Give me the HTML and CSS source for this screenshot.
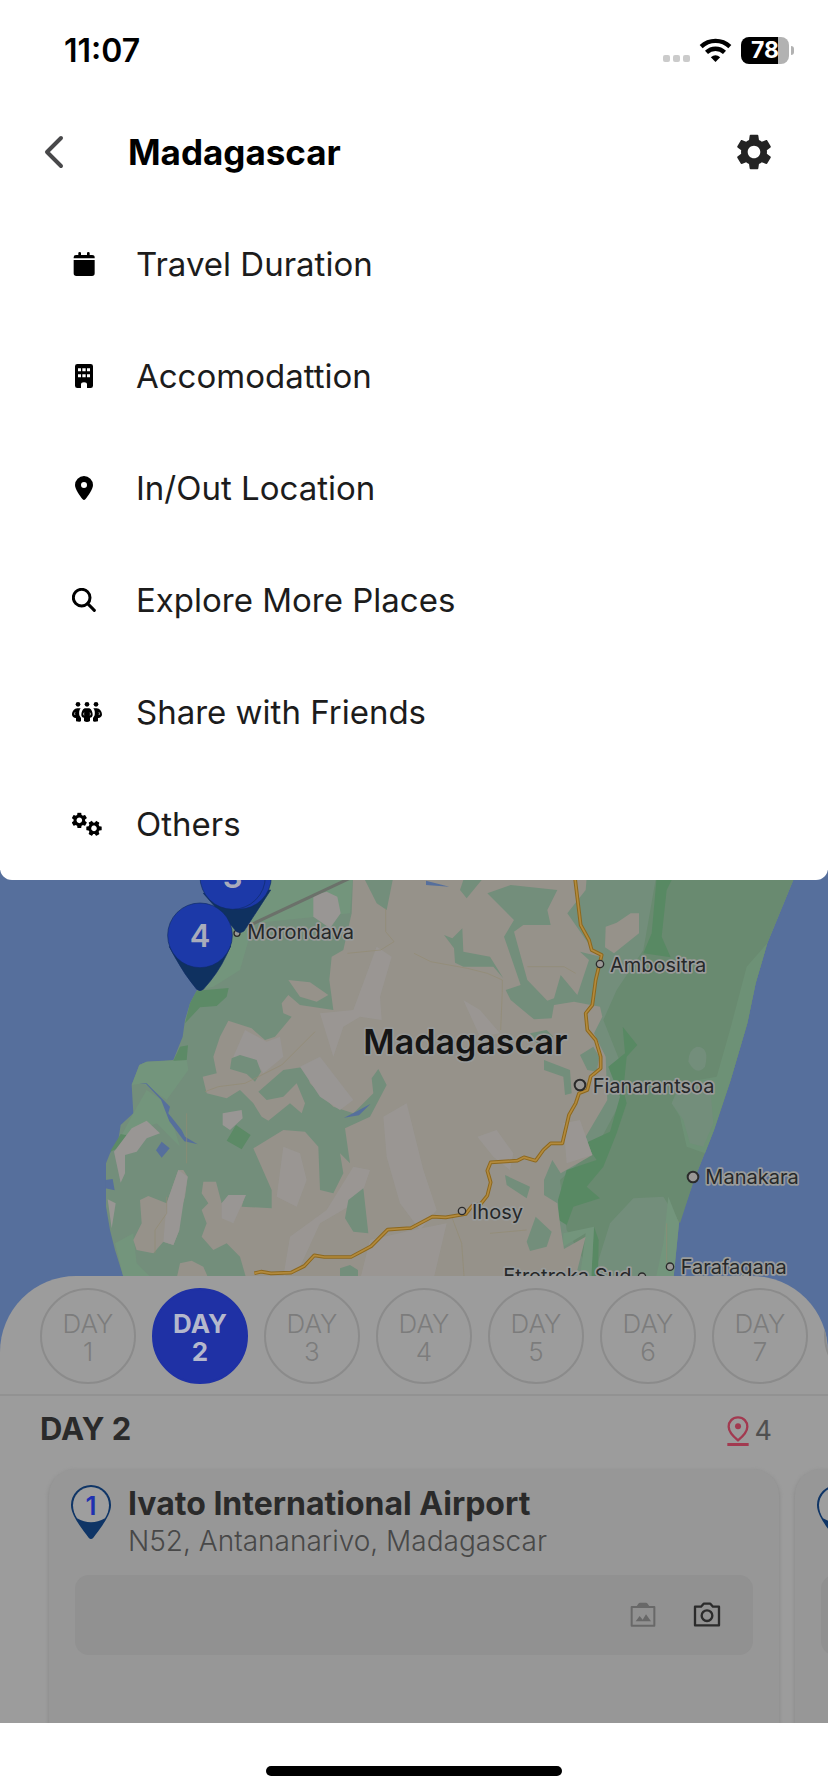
FILE: index.html
```
<!DOCTYPE html>
<html lang="en">
<head>
  <meta charset="utf-8">
  <meta name="viewport" content="width=device-width, initial-scale=1.0">
  <title>Madagascar</title>
  <link rel="stylesheet" href="styles.css">
</head>

<body>
  <!-- shared shapes -->
  <svg class="defs" width="0" height="0" aria-hidden="true">
    <symbol id="gear" viewBox="2 2 20 20">
      <path d="M19.14 12.94c.04-.3.06-.61.06-.94 0-.32-.02-.64-.07-.94l2.03-1.58c.18-.14.23-.41.12-.61l-1.92-3.32c-.12-.22-.37-.29-.59-.22l-2.39.96c-.5-.38-1.03-.7-1.62-.94l-.36-2.54c-.04-.24-.24-.41-.48-.41h-3.84c-.24 0-.43.17-.47.41l-.36 2.54c-.59.24-1.13.57-1.62.94l-2.39-.96c-.22-.08-.47 0-.59.22L2.74 8.87c-.12.21-.08.47.12.61l2.03 1.58c-.05.3-.09.63-.09.94s.02.64.07.94l-2.03 1.58c-.18.14-.23.41-.12.61l1.92 3.32c.12.22.37.29.59.22l2.39-.96c.5.38 1.03.7 1.62.94l.36 2.54c.05.24.24.41.48.41h3.84c.24 0 .44-.17.47-.41l.36-2.54c.59-.24 1.13-.56 1.62-.94l2.39.96c.22.08.47 0 .59-.22l1.92-3.32c.12-.22.07-.47-.12-.61l-2.01-1.58zM12 15.5c-1.93 0-3.5-1.57-3.5-3.5s1.57-3.5 3.5-3.5 3.5 1.57 3.5 3.5-1.57 3.5-3.5 3.5z"/>
    </symbol>
    <symbol id="card-pin" viewBox="0 0 120 162">
      <path fill="#0f3566" d="M60 0a60 60 0 0 1 60 61c0 32-36 74-53 97q-7 8-14 0C36 135 0 93 0 61A60 60 0 0 1 60 0z"/>
      <path fill="#9e9e9e" d="M60 6c31 0 54 25 54 55 0 14-5 28-12 39q-42 24-84 0C11 89 6 75 6 61 6 31 29 6 60 6z"/>
    </symbol>
  </svg>

  <div class="top-panel">
    <div class="status-bar">
      <span class="time">11:07</span>
      <div class="status-icons">
        <span class="signal"><i></i><i></i><i></i></span>
        <svg class="wifi" viewBox="178 48 98 78" aria-hidden="true">
          <path d="M184 77a62 62 0 0 1 86 0M200 94a39 39 0 0 1 54 0" fill="none" stroke="#000" stroke-width="13"/>
          <path d="M213 109q14-12 28 0l-14 14z"/>
        </svg>
        <span class="battery"><b>78</b></span>
      </div>
    </div>

    <header>
      <button class="icon-btn" aria-label="Back">
        <svg width="20" height="34" viewBox="0 0 20 34"><path d="M17 3L3 17l14 14" fill="none" stroke="#48484a" stroke-width="4" stroke-linecap="round" stroke-linejoin="round"/></svg>
      </button>
      <h1>Madagascar</h1>
      <button class="icon-btn" aria-label="Settings">
        <svg width="36" height="36" fill="#232323"><use href="#gear"/></svg>
      </button>
    </header>

    <nav>
      <ul>
        <li><a href="#duration">
          <svg width="24" height="24" viewBox="0 0 72 72"><path d="M5 19v-3q0-7 7-7h7V3q0-3 4-3t4 3v6h18V3q0-3 4-3t4 3v6h7q8 0 8 7v3zM5 24h63v40q0 8-8 8H13q-8 0-8-8z"/></svg>
          <span>Travel Duration</span></a></li>
        <li><a href="#accommodation">
          <svg width="24" height="24" viewBox="0 0 72 72"><path fill-rule="evenodd" d="M16 0h40q7 0 7 7v58q0 7-7 7H45V61q0-6-9-6t-9 6v11H16q-7 0-7-7V7q0-7 7-7zM18 13v9h9v-9zm13 0v9h10v-9zm14 0v9h9v-9zM18 31v9h9v-9zm13 0v9h10v-9zm14 0v9h9v-9z"/></svg>
          <span>Accomodattion</span></a></li>
        <li><a href="#location">
          <svg width="24" height="24" viewBox="0 0 72 72"><path fill-rule="evenodd" d="M36 0a27 27 0 0 1 27 27c0 13-15 33-23 43q-4 4-8 0C24 60 9 40 9 27A27 27 0 0 1 36 0zm0 18a9 9 0 1 0 0 18 9 9 0 0 0 0-18z"/></svg>
          <span>In/Out Location</span></a></li>
        <li><a href="#explore">
          <svg width="24" height="24" viewBox="0 0 72 72"><g fill="none" stroke="#000" stroke-width="9" stroke-linecap="round"><circle cx="29" cy="29" r="25"/><path d="M47 47l20 20"/></g></svg>
          <span>Explore More Places</span></a></li>
        <li><a href="#share">
          <svg width="30" height="22" viewBox="0 0 90 66">
            <circle cx="18" cy="10" r="7"/><circle cx="45" cy="10" r="7"/><circle cx="72" cy="10" r="7"/>
            <path d="M16 22h10c-5 6-5 13-4 21l5 8v9q-2 3-6 2l-9-1v-10C7 52 0 46 0 41c0-9 7-19 16-19zM74 22H64c5 6 5 13 4 21l-5 8v9q2 3 6 2l9-1v-10c5 1 12-5 12-10 0-9-7-19-16-19z"/>
            <path d="M38 22h14c7 3 10 12 10 20 0 5-4 8-8 8v10q-9 6-18 0V50c-4 0-8-3-8-8 0-8 3-17 10-20z"/>
            <path d="M9 34q-3 5 0 8M81 34q3 5 0 8M36 35q-3 4 0 8M54 35q3 4 0 8" fill="none" stroke="#fff" stroke-width="2"/>
          </svg>
          <span>Share with Friends</span></a></li>
        <li><a href="#others">
          <svg width="30" height="24" viewBox="0 0 90 72">
            <use href="#gear" x="-2" y="1" width="48" height="48"/>
            <use href="#gear" x="42" y="25" width="48" height="48" transform="rotate(30 66 49)"/>
          </svg>
          <span>Others</span></a></li>
      </ul>
    </nav>
  </div>

  <svg class="map" viewBox="0 0 2484 1500" preserveAspectRatio="xMidYMin slice" role="img" aria-label="Map of Madagascar">
    <rect width="2484" height="1500" fill="#566f9c"/>
    <!-- land -->
    <path fill="#738e7b" d="M720 0L700 200 640 300 590 362 570 400 555 450 548 500 520 570 440 575 418 585 395 645 400 730 362 765 355 810 330 850 318 880V1010L330 1080 345 1140 370 1220 400 1500H2010L2022 1210 2037 1060 2082 930 2142 780 2192 630 2242 460 2267 340 2302 220 2384 20V0z"/>
    <path fill="#73957c" d="M720 0H1060L1050 130 760 160 720 300 640 350 600 360 660 190zM440 575L560 570 565 600 500 690 430 640 395 645 418 585zM400 730L440 660 500 700 540 830 470 760 362 800zM345 1120L400 1090 410 1180 450 1220H370z"/>
    <path fill="#5c8a66" d="M590 362L686 354 680 380 650 408 600 412 555 460 570 400zM540 530L564 526 560 570 520 572zM362 792L380 796 355 835 330 845zM708 765L752 795 725 838 680 812z"/>
    <!-- rainforest belt -->
    <path fill="#698a70" d="M1972 0H2384V20L2302 220 2267 340 2242 460 2192 630 2142 780 2082 930 2040 1060 1990 980 1900 985 1830 1060 1780 1220 1700 1080 1680 930 1790 830 1860 700 1870 600 1810 450 1850 360 1930 240z"/>
    <path fill="#6d9176" d="M2302 220L2267 340 2242 460 2192 630 2142 780 2115 850 2060 830 2040 740 2015 700 2040 640 2150 620 2190 480 2240 290z"/>
    <path fill="#738e7b" d="M2090 530q40 0 25 60-25 30-50-15 0-35 25-45zM2045 640L2130 640 2140 760 2110 830 2070 820 2050 750 2015 700z"/>
    <path fill="#588963" d="M1972 0H2030L2000 60 1985 200 2012 262 1930 250 1955 190zM1868 470L1912 525 1880 560 1870 660 1880 700 1850 790 1810 890 1760 950 1800 985 1720 1010 1700 1065 1676 1050 1674 990 1700 900 1790 870 1755 820 1830 785 1860 680 1825 590 1875 550zM1782 1070L1796 1110 1794 1220H1774z"/>
    <path fill="#73957c" d="M1782 1070L1690 1090 1690 1130 1757 1090 1740 1220H1774zM2005 980L2037 1060 2022 1210 2018 1260H1960L1990 1120z"/>
    <!-- dry highlands -->
    <path fill="#96928a" d="M1060 0L1055 130 1030 240 995 260 988 330 1000 420 900 405 865 375 845 400 850 430 875 440 825 500 795 510 755 475 685 452 660 500 640 560 650 610 608 620 620 670 680 685 720 660 760 700 785 740 805 752 870 700 905 730 915 700 890 640 850 680 800 690 775 665 850 600 915 590 930 640 1000 710 1060 730 1120 670 1115 625 1135 597 1160 645 1110 740 1035 775 1050 880 1020 850 1030 910 1000 970 960 960 955 830 915 785 850 780 760 835 815 960 815 1015 725 1010 735 975 690 975 665 1000 648 935 610 935 605 970 625 1000 605 1020 620 1060 605 1100 640 1140 680 1120 720 1160 740 1230V1500H1700L1732 1200 1757 1100 1692 1137 1682 1075 1672 1000 1632 975V930L1657 870 1682 910 1777 855 1757 800 1822 690 1817 560 1782 490 1807 440 1800 410 1722 395 1662 405 1655 445 1602 448 1532 390 1517 360 1562 345 1512 200 1542 150 1462 70 1532 45 1672 60 1642 120 1652 165 1570 165 1542 185 1582 330 1642 392 1662 385 1682 315 1732 375 1767 270 1740 245 1802 260 1772 230 1702 130 1757 60 1762 0z"/>
    <path fill="#96928a" d="M1817 170L1850 158 1892 130H1917V190L1842 250 1815 232zM865 330L930 337 985 375 950 395 900 380zM420 990L445 978 500 1000 535 900 550 900 563 920 555 980 530 1060 538 1080 520 1125 490 1115 460 1150 410 1140 400 1110 425 1060zM540 1180L575 1172 610 1190 625 1225H530z"/>
    <path fill="#999694" d="M940 75L980 65 1012 80 1022 130 990 175 940 140zM342 845L395 775 440 752 480 790 440 805 410 845 375 855 375 910 362 938zM668 730L725 720 728 745 690 780 668 765zM323 988L347 1000 335 1075zM685 975L738 975 700 1060 665 1045 665 1000zM735 480L800 515 840 500 850 560 790 610 770 580 700 560zM900 590L960 560 1060 690 1020 720 960 680zM535 900L563 920 550 1000 538 1080 520 1125 490 1115 500 1000z"/>
    <path fill="#9b9997" opacity=".7" d="M1130 230L1175 260 1140 380 1145 450 1080 440 1030 470 1000 560 960 430 1060 420zM850 830L900 850 920 930 890 1010 830 980zM1060 890L1110 900 1080 990 960 1060 900 1190 850 1220 870 1100 980 1020zM1150 740L1220 700 1270 900 1310 1020 1260 1080 1200 1000 1160 860zM1390 390L1440 420 1500 490 1440 500zM1432 800L1490 780 1540 850 1530 900 1480 860zM1690 760L1740 750 1777 855 1700 880zM1110 1110L1240 1080 1340 1060 1300 1230H1080z"/>
    <!-- scattered woods -->
    <path fill="#738e7b" d="M1090 20L1180 20 1160 120 1130 100zM695 565L720 555 770 570 783 605 765 635 740 612 690 597zM1390 30H1445L1400 85 1380 60zM1332 195L1357 205 1387 175 1390 245 1470 260 1510 325 1480 290 1390 290 1365 278 1362 235zM1740 555L1780 530 1798 560 1790 605 1762 600zM1590 490L1640 480 1660 500 1610 520zM1632 570L1710 600 1715 670 1695 675 1690 620 1632 600zM1515 915L1590 950 1580 985 1520 945zM1607 1040L1655 1085 1640 1130 1590 1143 1580 1115zM1090 955L1105 1090 1060 1085 1035 1045 1045 990zM1020 1195L1050 1185 1074 1200V1225H1020z"/>
    <!-- lakes -->
    <path fill="#566f9c" d="M418 640h22l45 45 25 25-5 20 40 50 10 20 38 23-40-9-45-60-25-65-45-47zM485 815l24 20-24 28-17-22zM1032 743l40-20 40-22-35 35zM1278 32l70 18-70-5zM316 930l22-3 6 34-28-6z"/>
    <!-- minor roads -->
    <g fill="none" stroke="#938b72" stroke-width="2">
      <path d="M615 665l40-15 80-10 110-55 60-60 40-40M1157 115v70l25 30-40 25-100 10M1242 250l50 25 110 20 60 15 45 20v30l-5 120M1582 290l110 0 35 20M1355 1040l30 80 10 140M1470 1090l110-10M465 1150v-70l35-50v-50M560 730v150M2000 1180V1060"/>
    </g>
    <!-- national road -->
    <defs>
      <path id="rn7" d="M1722 0l20 165 25 45 8 30 30 15-18 75-10 75-20 25 5 50 25 30 15 50v35l-30 25-10 40-25 10-10 30-20 35-20 85h-35l-22 20-23 32-35-10-20 10-80 5-10 25 10 35-10 40-20 25-25 5-20 25-60 10-40-2-64 34-70 5-50 50-60 32-80 0-30-5-30 32-40 20-60 2-30-5-20 5"/>
    </defs>
    <g fill="none" stroke-linejoin="round">
      <use href="#rn7" stroke="#8d681e" stroke-width="11"/>
      <use href="#rn7" stroke="#b38a3c" stroke-width="5"/>
    </g>
    <path d="M740 170L1060 20" stroke="#6b716a" stroke-width="9"/>
    <!-- towns -->
    <g fill="#9a9896" stroke="#2b2b2b" stroke-width="4">
      <circle cx="711" cy="190" r="9"/>
      <circle cx="1800" cy="282" r="11"/>
      <circle cx="1740" cy="645" r="16" stroke-width="6"/>
      <circle cx="2079" cy="921" r="16" stroke-width="6"/>
      <circle cx="1386" cy="1023" r="11"/>
      <circle cx="2010" cy="1190" r="11"/>
      <circle cx="1926" cy="1220" r="11"/>
    </g>
    <g class="town">
      <text x="742" y="208">Morondava</text>
      <text x="1830" y="306">Ambositra</text>
      <text x="1778" y="669">Fianarantsoa</text>
      <text x="2116" y="943">Manakara</text>
      <text x="1416" y="1046">Ihosy</text>
      <text x="2042" y="1213">Farafagana</text>
      <text x="1510" y="1240">Etrotroka Sud</text>
      <text class="country" x="1090" y="553">Madagascar</text>
    </g>
    <!-- stops -->
    <g stroke="#0f2c66" stroke-width="2">
      <path fill="#0f3160" d="M610 70l100 115q12 6 22-2L812 60z"/>
      <circle cx="716" cy="20" r="98" fill="#1c39a8"/>
      <circle cx="698" cy="20" r="98" fill="#1c39a8"/>
      <path fill="#0f3160" d="M508 230l16 30q30 55 66 98 10 8 20 0 45-50 68-100l14-30z"/>
      <circle cx="600" cy="196" r="97" fill="#1c39a8"/>
    </g>
    <g class="stop">
      <text x="698" y="54">3</text>
      <text x="600" y="230">4</text>
    </g>
  </svg>

  <main>
    <div class="days">
      <button>DAY<br>1</button>
      <button class="active">DAY<br>2</button>
      <button>DAY<br>3</button>
      <button>DAY<br>4</button>
      <button>DAY<br>5</button>
      <button>DAY<br>6</button>
      <button>DAY<br>7</button>
      <button aria-label="Next day"></button>
    </div>

    <div class="day-head">
      <h2>DAY 2</h2>
      <span class="count">
        <svg width="22" height="30" viewBox="0 0 66 90" aria-hidden="true"><path d="M33 4c17 0 28 13 28 28 0 14-16 31-28 41C21 63 5 46 5 32 5 17 16 4 33 4z" fill="none" stroke="#a23a50" stroke-width="7"/><circle cx="33" cy="31" r="9" fill="#a23a50"/><path d="M1 81h64v9H1z" fill="#a23a50"/></svg>
        4
      </span>
    </div>

    <div class="cards">
      <article class="card">
        <div class="place">
          <div class="pin"><svg width="40" height="54" aria-hidden="true"><use href="#card-pin"/></svg><b>1</b></div>
          <div>
            <h3>Ivato International Airport</h3>
            <p>N52, Antananarivo, Madagascar</p>
          </div>
        </div>
        <div class="photos">
          <button class="icon-btn" aria-label="Gallery">
            <svg width="28" height="26" viewBox="0 0 84 78"><path d="M8 15h68v56H8z" fill="none" stroke="#686868" stroke-width="6" stroke-linejoin="round"/><path fill="#686868" d="M23 13l5-8q2-3 5-3h18q3 0 5 3l5 8v5H23zM20 58l12-16 9 11 10-16 15 21z"/></svg>
          </button>
          <button class="icon-btn" aria-label="Camera">
            <svg width="28" height="26" viewBox="0 0 84 78"><g fill="none" stroke="#2b2b2b" stroke-width="7" stroke-linejoin="round"><path d="M6 14h18l8-9h20l8 9h18v56H6z"/><circle cx="42" cy="41" r="16"/></g></svg>
          </button>
        </div>
      </article>
      <article class="card">
        <div class="place">
          <div class="pin"><svg width="40" height="54" aria-hidden="true"><use href="#card-pin"/></svg></div>
        </div>
        <div class="photos"></div>
      </article>
    </div>
  </main>

  <footer><div class="home-bar"></div></footer>
</body>
</html>
```
FILE: styles.css
```
* {
  box-sizing: border-box;
}

body {
  margin: 0;
  min-height: 100vh;
  display: flex;
  flex-direction: column;
  overflow-x: hidden;
  background: #fff;
  font-family: Inter, "Liberation Sans", sans-serif;
  color: #000;
}

h1, h2, h3, p, ul {
  margin: 0;
  padding: 0;
}

button {
  font-family: inherit;
  cursor: pointer;
}

.defs {
  position: absolute;
}

.icon-btn {
  display: flex;
  padding: 0;
  border: none;
  background: none;
}

/* white drop-down panel */
.top-panel {
  position: relative;
  z-index: 2;
  background: #fff;
  border-radius: 0 0 12px 12px;
}

.status-bar {
  display: flex;
  justify-content: space-between;
  align-items: center;
  height: 100px;
  padding: 0 34px 0 64px;
}

.time {
  font-size: 32px;
  font-weight: 600;
}

.status-icons {
  display: flex;
  align-items: center;
  gap: 9px;
}

.signal {
  display: flex;
  gap: 3px;
  padding-top: 16px;
}

.signal i {
  width: 7px;
  height: 7px;
  border-radius: 2px;
  background: #cbcbcb;
}

.wifi {
  width: 33px;
  height: 26px;
}

.battery {
  position: relative;
  width: 48px;
  height: 27px;
  margin-right: 5px;
  border-radius: 8px;
  background: linear-gradient(to right, #000 37px, #b2b2b2 37px);
  color: #fff;
  font-size: 23px;
  line-height: 27px;
  text-align: center;
}

.battery::after {
  content: "";
  position: absolute;
  left: 50px;
  top: 9px;
  width: 3px;
  height: 9px;
  border-radius: 0 4px 4px 0;
  background: #b2b2b2;
}

header {
  display: flex;
  align-items: center;
  height: 108px;
  padding: 0 56px 4px 44px;
}

h1 {
  flex: 1;
  margin-left: 64px;
  font-size: 35px;
  font-weight: 700;
}

nav ul {
  list-style: none;
}

nav a {
  display: flex;
  align-items: center;
  height: 112px;
  padding-left: 72px;
  color: #1c1c1c;
  font-size: 33px;
  font-weight: 400;
  text-decoration: none;
}

nav svg {
  flex: none;
  fill: #000;
}

nav span {
  flex: 1;
  margin-left: 40px;
}

nav svg[width="30"] + span {
  margin-left: 34px;
}

/* map */
.map {
  display: block;
  width: 100%;
  height: 500px;
  margin-top: -10px;
}

.town {
  font-size: 60px;
  fill: #262829;
  stroke: #999b9a;
  stroke-width: 10px;
  stroke-linejoin: round;
  paint-order: stroke;
}

.country {
  font-size: 102px;
  font-weight: 600;
  fill: #161616;
}

.stop {
  font-size: 93px;
  font-weight: 600;
  fill: #a8acbb;
  text-anchor: middle;
}

/* trip sheet */
main {
  position: relative;
  flex: 1;
  display: flex;
  flex-direction: column;
  margin-top: -94px;
  overflow: hidden;
  border-radius: 76px 76px 0 0;
  background: #9c9c9c;
}

.days {
  display: flex;
  gap: 16px;
  height: 120px;
  padding: 12px 0 0 40px;
  border-bottom: 2px solid #929292;
}

.days button {
  flex: none;
  width: 96px;
  height: 96px;
  padding: 4px 0 0;
  border: 2px solid #8b8b8b;
  border-radius: 50%;
  background: none;
  color: #7c7c7c;
  font-size: 26px;
  font-weight: 300;
  line-height: 28px;
}

.days .active {
  border-color: #1f31a5;
  background: #1f31a5;
  color: #b4b8cc;
  font-weight: 700;
}

.day-head {
  display: flex;
  justify-content: space-between;
  align-items: center;
  height: 73px;
  padding: 0 56px 8px 40px;
}

h2 {
  font-size: 31px;
  font-weight: 700;
  color: #2a2a2a;
}

.count {
  display: flex;
  align-items: center;
  gap: 6px;
  padding-top: 4px;
  color: #505050;
  font-size: 27px;
}

.cards {
  display: flex;
  flex: 1;
  gap: 16px;
  padding-left: 49px;
}

.card {
  flex: none;
  width: calc(100% - 49px);
  padding: 16px 26px;
  border-radius: 26px 26px 0 0;
  background: #979797;
  box-shadow: 0 2px 4px #858585;
}

.place {
  display: flex;
  gap: 17px;
  height: 90px;
  margin-left: -4px;
}

.pin {
  position: relative;
  width: 40px;
  height: 54px;
}

.pin b {
  position: absolute;
  top: 6px;
  left: 0;
  width: 40px;
  color: #1f31b0;
  font-size: 26px;
  font-weight: 600;
  line-height: 30px;
  text-align: center;
}

h3 {
  font-size: 32px;
  font-weight: 700;
  line-height: 38px;
  color: #2a2a2a;
}

p {
  font-size: 28px;
  font-weight: 300;
  line-height: 36px;
  color: #484848;
}

.photos {
  display: flex;
  justify-content: flex-end;
  align-items: center;
  gap: 36px;
  height: 80px;
  padding-right: 32px;
  border-radius: 14px;
  background: #919191;
}

footer {
  display: flex;
  justify-content: center;
  height: 69px;
  padding-top: 43px;
  background: #fff;
}

.home-bar {
  width: 296px;
  height: 10px;
  border-radius: 5px;
  background: #000;
}
```
